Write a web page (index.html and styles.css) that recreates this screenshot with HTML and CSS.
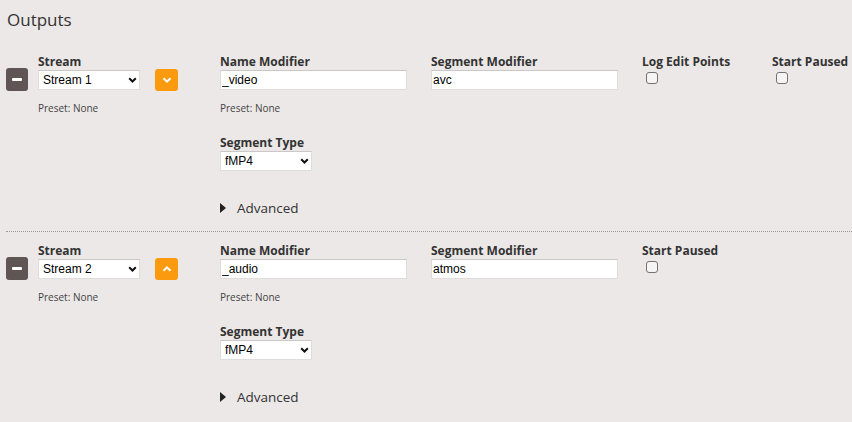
FILE: index.html
```html
<!DOCTYPE html>
<html>
<head>
<meta charset="utf-8">
<link rel="stylesheet" href="styles.css">
</head>
<body>
<div class="page">
  <h1 class="title">Outputs</h1>

  <div class="output">
    <button class="btn-remove" type="button"><span class="minus"></span></button>
    <div class="stream-col">
      <label class="lbl">Stream</label>
      <div class="select-wrap w-stream">
        <select class="select"><option>Stream 1</option></select>
        <svg class="chev" viewBox="0 0 9 6" width="9" height="6"><polyline points="1.2,1.2 4.5,4.5 7.8,1.2" fill="none" stroke="#111" stroke-width="2"/></svg>
      </div>
      <div class="preset">Preset: None</div>
    </div>
    <button class="btn-move" type="button">
      <svg viewBox="0 0 10 6" width="10" height="6"><polyline points="1.5,1.2 5,4.6 8.5,1.2" fill="none" stroke="#fff" stroke-width="2"/></svg>
    </button>
    <div class="fields">
      <div class="field-row">
        <div class="f-wide">
          <label class="lbl">Name Modifier</label>
          <input class="text-input" type="text" value="_video">
          <div class="preset">Preset: None</div>
        </div>
        <div class="f-wide">
          <label class="lbl">Segment Modifier</label>
          <input class="text-input" type="text" value="avc">
        </div>
        <div class="f-check">
          <label class="lbl">Log Edit Points</label>
          <input class="cb" type="checkbox">
        </div>
        <div class="f-last">
          <label class="lbl">Start Paused</label>
          <input class="cb" type="checkbox">
        </div>
      </div>
      <div class="seg-type">
        <label class="lbl">Segment Type</label>
        <div class="select-wrap w-type">
          <select class="select"><option>fMP4</option></select>
          <svg class="chev" viewBox="0 0 9 6" width="9" height="6"><polyline points="1.2,1.2 4.5,4.5 7.8,1.2" fill="none" stroke="#111" stroke-width="2"/></svg>
        </div>
      </div>
      <div class="advanced">
        <svg class="tri" viewBox="0 0 6 10" width="6" height="10"><polygon points="0,0 6,5 0,10" fill="#222"/></svg>
        <span>Advanced</span>
      </div>
    </div>
  </div>

  <div class="output">
    <button class="btn-remove" type="button"><span class="minus"></span></button>
    <div class="stream-col">
      <label class="lbl">Stream</label>
      <div class="select-wrap w-stream">
        <select class="select"><option>Stream 2</option></select>
        <svg class="chev" viewBox="0 0 9 6" width="9" height="6"><polyline points="1.2,1.2 4.5,4.5 7.8,1.2" fill="none" stroke="#111" stroke-width="2"/></svg>
      </div>
      <div class="preset">Preset: None</div>
    </div>
    <button class="btn-move" type="button">
      <svg viewBox="0 0 10 6" width="10" height="6"><polyline points="1.5,4.8 5,1.4 8.5,4.8" fill="none" stroke="#fff" stroke-width="2"/></svg>
    </button>
    <div class="fields">
      <div class="field-row">
        <div class="f-wide">
          <label class="lbl">Name Modifier</label>
          <input class="text-input" type="text" value="_audio">
          <div class="preset">Preset: None</div>
        </div>
        <div class="f-wide">
          <label class="lbl">Segment Modifier</label>
          <input class="text-input" type="text" value="atmos">
        </div>
        <div class="f-last">
          <label class="lbl">Start Paused</label>
          <input class="cb" type="checkbox">
        </div>
      </div>
      <div class="seg-type">
        <label class="lbl">Segment Type</label>
        <div class="select-wrap w-type">
          <select class="select"><option>fMP4</option></select>
          <svg class="chev" viewBox="0 0 9 6" width="9" height="6"><polyline points="1.2,1.2 4.5,4.5 7.8,1.2" fill="none" stroke="#111" stroke-width="2"/></svg>
        </div>
      </div>
      <div class="advanced">
        <svg class="tri" viewBox="0 0 6 10" width="6" height="10"><polygon points="0,0 6,5 0,10" fill="#222"/></svg>
        <span>Advanced</span>
      </div>
    </div>
  </div>
</div>
</body>
</html>
```
FILE: styles.css
```css
* { box-sizing: border-box; }

html, body {
  margin: 0;
  background: #ece8e7;
}

body {
  font-family: "Open Sans", "DejaVu Sans", sans-serif;
  color: #333;
  overflow: hidden;
}

.page {
  padding-left: 6px;
}

.title {
  margin: 10px 0 12px 1px;
  font-size: 17px;
  line-height: 20px;
  font-weight: 400;
  color: #333;
}

.output {
  display: flex;
  align-items: flex-start;
  padding: 13px 0 15px;
}

.output + .output {
  border-top: 1px dotted #9d9999;
  padding-top: 12px;
}

.btn-remove {
  width: 22px;
  height: 23px;
  margin-top: 13px;
  padding: 0;
  border: none;
  border-radius: 3px;
  background: #5e5554;
  display: flex;
  align-items: center;
  justify-content: center;
  flex: none;
}

.minus {
  display: block;
  width: 10px;
  height: 3px;
  background: #fff;
  border-radius: 1px;
}

.stream-col {
  margin-left: 10px;
  width: 102px;
  flex: none;
}

.btn-move {
  width: 23px;
  height: 22px;
  margin: 14px 0 0 15px;
  padding: 0;
  border: none;
  border-radius: 3px;
  background: #fb9a0f;
  display: flex;
  align-items: center;
  justify-content: center;
  flex: none;
}

.btn-move svg { display: block; }

.fields {
  margin-left: 42px;
  flex: 1;
  min-width: 0;
}

.field-row {
  display: flex;
}

.f-wide { width: 211px; flex: none; }
.f-check { width: 130px; flex: none; }
.f-last { flex: 1; min-width: 0; }

.lbl {
  display: block;
  font-size: 12px;
  line-height: 14px;
  font-weight: 700;
  color: #333;
  margin-bottom: 1px;
  white-space: nowrap;
}

.text-input {
  display: block;
  width: 187px;
  height: 20px;
  margin: 0;
  padding: 0 0 0 1px;
  border: 1px solid #e0dcdb;
  border-top-color: #cbc7c6;
  border-radius: 0;
  background: #fff;
  font-family: "Liberation Sans", Arial, sans-serif;
  font-size: 12px;
  color: #000;
  outline: none;
}

.preset {
  margin-top: 12px;
  font-size: 10px;
  line-height: 12px;
  color: #444;
  white-space: nowrap;
}

.select-wrap {
  position: relative;
  height: 20px;
}

.w-stream { width: 102px; }
.w-type { width: 92px; }

.select {
  -webkit-appearance: none;
  appearance: none;
  display: block;
  width: 100%;
  height: 100%;
  margin: 0;
  padding: 0 0 0 4px;
  border: 1px solid #e0dcdb;
  border-top-color: #cbc7c6;
  border-radius: 0;
  background: #fff;
  font-family: "Liberation Sans", Arial, sans-serif;
  font-size: 12px;
  color: #000;
  outline: none;
}

.chev {
  position: absolute;
  right: 3px;
  top: 7px;
  pointer-events: none;
}

.cb {
  -webkit-appearance: none;
  appearance: none;
  display: block;
  width: 12px;
  height: 12px;
  margin: 3px 0 0 4px;
  border: 1px solid #767272;
  border-radius: 3px;
  background: #f6f4f4;
}

.seg-type {
  margin-top: 22px;
}

.advanced {
  margin-top: 29px;
  display: flex;
  align-items: center;
  font-size: 13.5px;
  line-height: 16px;
  color: #333;
}

.tri {
  display: block;
  margin-right: 11px;
}
```
